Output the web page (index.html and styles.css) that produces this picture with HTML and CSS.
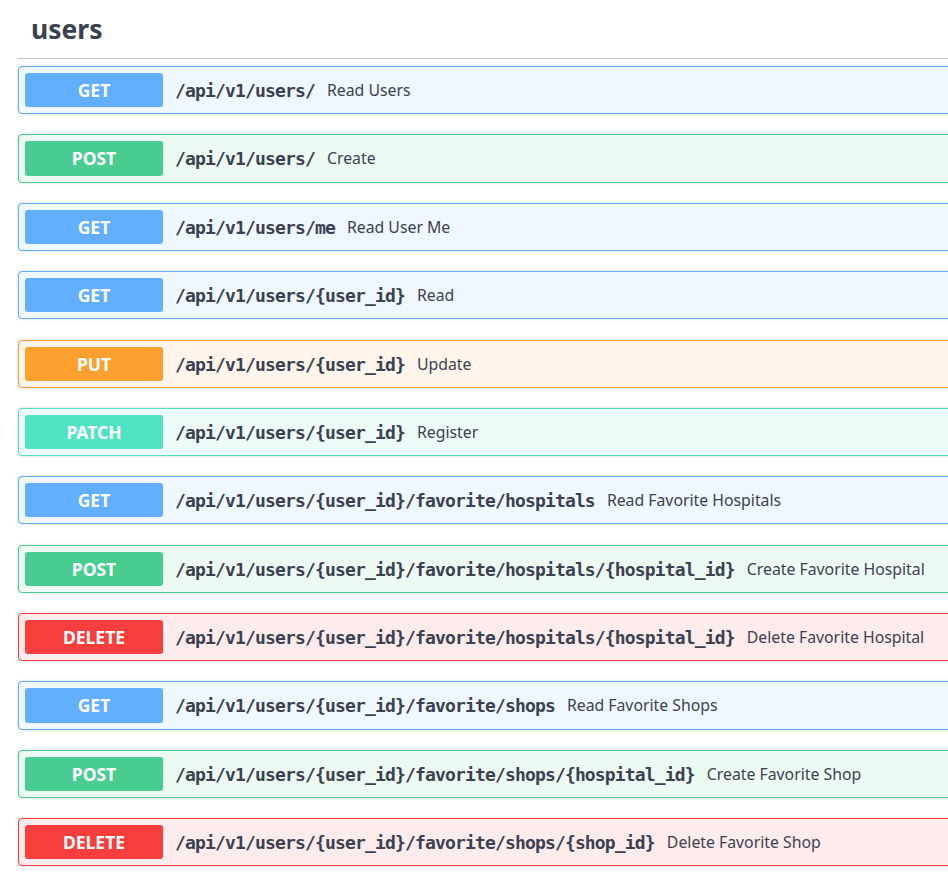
FILE: index.html
```html
<!DOCTYPE html>
<html lang="en">
<head>
<meta charset="utf-8">
<title>users</title>
<link rel="stylesheet" href="styles.css">
</head>
<body>
<section class="tag-section">
  <h3 class="tag-title"><span>users</span></h3>
  <div class="ops">
    <div class="op op-get"><span class="method">GET</span><span class="path">/api/v1/users/</span><span class="desc">Read Users</span></div>
    <div class="op op-post"><span class="method">POST</span><span class="path">/api/v1/users/</span><span class="desc">Create</span></div>
    <div class="op op-get"><span class="method">GET</span><span class="path">/api/v1/users/me</span><span class="desc">Read User Me</span></div>
    <div class="op op-get"><span class="method">GET</span><span class="path">/api/v1/users/{user_id}</span><span class="desc">Read</span></div>
    <div class="op op-put"><span class="method">PUT</span><span class="path">/api/v1/users/{user_id}</span><span class="desc">Update</span></div>
    <div class="op op-patch"><span class="method">PATCH</span><span class="path">/api/v1/users/{user_id}</span><span class="desc">Register</span></div>
    <div class="op op-get"><span class="method">GET</span><span class="path">/api/v1/users/{user_id}/favorite/hospitals</span><span class="desc">Read Favorite Hospitals</span></div>
    <div class="op op-post"><span class="method">POST</span><span class="path">/api/v1/users/{user_id}/favorite/hospitals/{hospital_id}</span><span class="desc">Create Favorite Hospital</span></div>
    <div class="op op-delete"><span class="method">DELETE</span><span class="path">/api/v1/users/{user_id}/favorite/hospitals/{hospital_id}</span><span class="desc">Delete Favorite Hospital</span></div>
    <div class="op op-get"><span class="method">GET</span><span class="path">/api/v1/users/{user_id}/favorite/shops</span><span class="desc">Read Favorite Shops</span></div>
    <div class="op op-post"><span class="method">POST</span><span class="path">/api/v1/users/{user_id}/favorite/shops/{hospital_id}</span><span class="desc">Create Favorite Shop</span></div>
    <div class="op op-delete"><span class="method">DELETE</span><span class="path">/api/v1/users/{user_id}/favorite/shops/{shop_id}</span><span class="desc">Delete Favorite Shop</span></div>
  </div>
</section>
</body>
</html>
```

FILE: styles.css
```css
html, body {
  margin: 0;
  padding: 0;
  background: #ffffff;
  overflow: hidden;
}

body {
  font-family: "Noto Sans", "Liberation Sans", sans-serif;
  color: #3b4151;
}

.tag-section {
  margin-left: 18px;
  margin-right: -30px;
}

.tag-title {
  margin: 0;
  padding: 11px 20px 10px 13px;
  font-size: 26.5px;
  line-height: 37px;
  font-weight: 700;
  color: #3b4151;
  border-bottom: 1px solid rgba(59, 65, 81, 0.3);
}

.ops {
  padding-top: 7px;
}

.op {
  display: flex;
  align-items: center;
  padding: 6px;
  margin-bottom: 20.2px;
  border: 1px solid #61affe;
  border-radius: 4px;
  background: #eff7ff;
  box-shadow: 0 0 3px rgba(0, 0, 0, 0.19);
}

.method {
  flex: 0 0 auto;
  width: 138px;
  height: 34.2px;
  line-height: 34px;
  border-radius: 3px;
  background: #61affe;
  color: #ffffff;
  font-family: "Noto Sans", "Liberation Sans", sans-serif;
  font-size: 17.5px;
  font-weight: 700;
  text-align: center;
}

.path {
  padding: 1px 12px 0 12px;
  font-family: "DejaVu Sans Mono", "Liberation Mono", monospace;
  font-size: 18px;
  letter-spacing: -0.84px;
  font-weight: 700;
  color: #3b4151;
  white-space: nowrap;
}

.desc {
  font-size: 15.8px;
  color: #3b4151;
  white-space: nowrap;
}

.op-post { border-color: #49cc90; background: #edfaf4; }
.op-post .method { background: #49cc90; }

.op-put { border-color: #fca130; background: #fff5ea; }
.op-put .method { background: #fca130; }

.op-patch { border-color: #50e3c2; background: #edfcf9; }
.op-patch .method { background: #50e3c2; }

.op-delete { border-color: #f93e3e; background: #feebeb; }
.op-delete .method { background: #f93e3e; }
```
